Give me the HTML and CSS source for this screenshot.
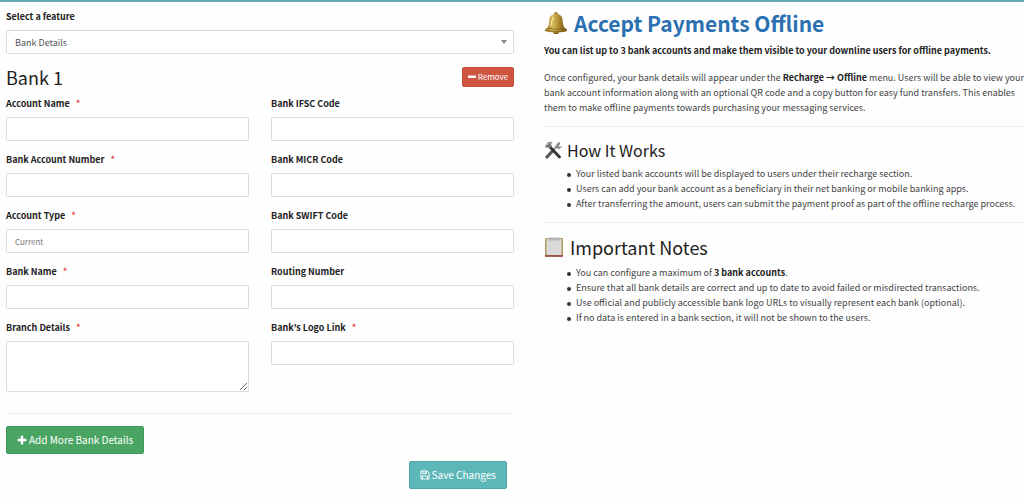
FILE: index.html
```
<!DOCTYPE html>
<html lang="en">
  <head>
    <meta charset="UTF-8" />
    <meta name="viewport" content="width=device-width, initial-scale=1.0" />
    <title>Bank Details</title>
    <link rel="stylesheet" href="styles.css">
  </head>
  <body>
    <main class="page">
      <form class="settings">
        <label class="label" for="feature">Select a feature</label>
        <div class="select">
          <select class="control" id="feature">
            <option>Bank Details</option>
          </select>
        </div>

        <div class="bank-header">
          <h2 class="bank-title">Bank 1</h2>
          <button class="btn btn--danger" type="button">
            <svg class="icon icon--small" viewBox="0 0 16 16" aria-hidden="true"><rect x="0" y="5" width="16" height="5" rx="1" /></svg>
            Remove
          </button>
        </div>

        <div class="fields">
          <div class="field">
            <label class="label" for="account-name">Account Name <span class="required">*</span></label>
            <input class="control" id="account-name" type="text" />
          </div>
          <div class="field">
            <label class="label" for="ifsc">Bank IFSC Code</label>
            <input class="control" id="ifsc" type="text" />
          </div>
          <div class="field">
            <label class="label" for="account-number">Bank Account Number <span class="required">*</span></label>
            <input class="control" id="account-number" type="text" />
          </div>
          <div class="field">
            <label class="label" for="micr">Bank MICR Code</label>
            <input class="control" id="micr" type="text" />
          </div>
          <div class="field">
            <label class="label" for="account-type">Account Type <span class="required">*</span></label>
            <select class="control control--type" id="account-type">
              <option>Current</option>
            </select>
          </div>
          <div class="field">
            <label class="label" for="swift">Bank SWIFT Code</label>
            <input class="control" id="swift" type="text" />
          </div>
          <div class="field">
            <label class="label" for="bank-name">Bank Name <span class="required">*</span></label>
            <input class="control" id="bank-name" type="text" />
          </div>
          <div class="field">
            <label class="label" for="routing">Routing Number</label>
            <input class="control" id="routing" type="text" />
          </div>
          <div class="field">
            <label class="label" for="branch">Branch Details <span class="required">*</span></label>
            <textarea class="control control--area" id="branch"></textarea>
          </div>
          <div class="field">
            <label class="label" for="logo">Bank's Logo Link <span class="required">*</span></label>
            <input class="control" id="logo" type="text" />
          </div>
        </div>

        <hr class="divider divider--form" />

        <button class="btn btn--success" type="button">
          <svg class="icon" viewBox="0 0 16 16" aria-hidden="true"><path d="M6 1h4v5h5v4h-5v5H6v-5H1V6h5z" /></svg>
          Add More Bank Details
        </button>
        <div class="actions">
          <button class="btn btn--primary" type="submit">
            <svg class="icon icon--line" viewBox="0 0 16 16" aria-hidden="true">
              <path d="M1.5 1.5h10l3 3v10h-13z" />
              <path d="M4.5 1.5v4h6v-4M8.5 2.5v2M4 14.5v-5h8v5" />
            </svg>
            Save Changes
          </button>
        </div>
      </form>

      <section class="help">
        <h1 class="help-title">
          <svg class="help-icon help-icon--bell" viewBox="0 0 24 24" aria-hidden="true">
            <defs>
              <linearGradient id="gold">
                <stop offset="0" stop-color="#9a7420" />
                <stop offset="0.35" stop-color="#d8bc60" />
                <stop offset="0.65" stop-color="#ab852c" />
                <stop offset="1" stop-color="#6b4c0f" />
              </linearGradient>
            </defs>
            <circle cx="12" cy="3" r="2" fill="#a98227" />
            <ellipse cx="12" cy="21" rx="3" ry="2" fill="#70500f" />
            <path d="M12 3C7 3 5.500 6 5.300 10C5 15 4 16.500 1.500 18C.5 19 1 20 2.500 20.500C8 22 16 22 21.500 20.500C23 20 23.500 19 22.500 18C20 16.500 19 15 18.700 10C18.500 6 17 3 12 3z" fill="url(#gold)" />
            <path d="M4 17q8 3 16 0M2 19.500q10 2.500 20 0" fill="none" stroke="#7d5c17" stroke-width=".8" />
            <path d="M9 6q-1.500 4-2 9" fill="none" stroke="#f7e7a0" stroke-width="1.200" />
          </svg>
          Accept Payments Offline
        </h1>
        <p class="lead">You can list up to 3 bank accounts and make them visible to your downline users for offline payments.</p>
        <p class="text">
          Once configured, your bank details will appear under the <strong>Recharge → Offline</strong> menu. Users will be able to view your
          bank account information along with an optional QR code and a copy button for easy fund transfers. This enables
          them to make offline payments towards purchasing your messaging services.
        </p>
        <hr class="divider" />

        <h3 class="help-heading">
          <svg class="help-icon help-icon--tools" viewBox="0 0 18 18" aria-hidden="true">
            <path d="M15.500 2.500L8 10" stroke="#9a9a9a" stroke-width="2" />
            <path d="M9 9.500L3 16" stroke="#555" stroke-width="3.200" stroke-linecap="round" />
            <path d="M12.500 3.500l2-2.500a3.500 3.500 0 0 1 2 1l-2 2 .5 1.500 1.500.3 1-1.300c.5 2-1.500 4-4 3.300L11 6z" fill="#8d8d8d" />
            <path d="M6 6l9.500 10" stroke="#333" stroke-width="2.800" stroke-linecap="round" />
            <path d="M1 5.500L3 3l.5-1.500C5 .5 7 .5 8.500 1.500L6.800 3 8 5.500 5.500 8 4 6 2.500 7z" fill="#777" />
            <path d="M3 4.500l2-2.500 2-.5" fill="none" stroke="#c4c4c4" stroke-width=".8" />
          </svg>
          How It Works
        </h3>
        <ul class="list">
          <li>Your listed bank accounts will be displayed to users under their recharge section.</li>
          <li>Users can add your bank account as a beneficiary in their net banking or mobile banking apps.</li>
          <li>After transferring the amount, users can submit the payment proof as part of the offline recharge process.</li>
        </ul>
        <hr class="divider" />

        <h2 class="help-heading help-heading--large">
          <svg class="help-icon help-icon--clipboard" viewBox="0 0 20 20" aria-hidden="true">
            <rect x="1" y="1" width="18" height="18.500" rx="1" fill="#b39a62" />
            <path d="M1 19h18" stroke="#8c3f35" stroke-width="1.500" />
            <rect x="2.500" y="2" width="15" height="16" fill="#dcdcda" />
            <path d="M4 5h12M4 8h12M4 11h12M4 14h12" stroke="#d2d2d1" stroke-width=".8" />
            <path d="M5 .5h10l1 3H4z" fill="#b5b7b7" />
          </svg>
          Important Notes
        </h2>
        <ul class="list">
          <li>You can configure a maximum of <strong>3 bank accounts</strong>.</li>
          <li>Ensure that all bank details are correct and up to date to avoid failed or misdirected transactions.</li>
          <li>Use official and publicly accessible bank logo URLs to visually represent each bank (optional).</li>
          <li>If no data is entered in a bank section, it will not be shown to the users.</li>
        </ul>
      </section>
    </main>
  </body>
</html>
```

FILE: styles.css
```
* {
  margin: 0;
  padding: 0;
  box-sizing: border-box;
}

body {
  font-family: "Noto Sans CJK SC", "Open Sans", sans-serif;
  font-size: 9px;
  line-height: 15px;
  color: #444;
  background-color: #fefefe;
  border-top: 2px solid #62a9b3;
}

.page {
  display: grid;
  grid-template-columns: 127fr 120fr;
  gap: 30px;
  padding: 7px 0 14px 6px;
}

.label {
  display: block;
  margin-bottom: 6px;
  font-weight: bold;
  color: #222;
}

.required {
  margin-left: 4px;
  color: #e0523f;
}

.control {
  display: block;
  width: 100%;
  height: 24px;
  padding: 0 8px;
  font: inherit;
  color: #555;
  background-color: #fff;
  border: 1px solid #ddd;
  border-radius: 1px;
  appearance: none;
}

.control--type {
  font-size: 8px;
  color: #777;
}

.control--area {
  height: 51px;
  resize: both;
}

.select {
  display: grid;
  align-items: center;
}

.select .control,
.select::after {
  grid-area: 1 / 1;
}

.select::after {
  content: "";
  justify-self: end;
  margin-right: 7px;
  border: 3px solid transparent;
  border-top: 4px solid #888;
  border-bottom: 0;
  pointer-events: none;
}

.bank-header {
  display: flex;
  align-items: center;
  justify-content: space-between;
  margin: 11px 0 7px;
}

.bank-title {
  font-size: 18px;
  line-height: 24px;
  font-weight: normal;
  color: #222;
}

.fields {
  display: grid;
  grid-template-columns: 1fr 1fr;
  gap: 11px 22px;
}

.divider {
  border: 0;
  border-top: 1px solid #eee;
  margin: 11px 0;
}

.divider--form {
  margin: 21px 0 12px;
}

.btn {
  display: inline-flex;
  align-items: center;
  gap: 2px;
  padding: 0 10px;
  font: inherit;
  font-size: 10px;
  line-height: 26px;
  color: #fff;
  border: 1px solid;
  border-radius: 2px;
  cursor: pointer;
}

.btn--danger {
  padding: 0 5px;
  font-size: 8px;
  line-height: 18px;
  background-color: #cd5542;
  border-color: #c44c39;
}

.btn--success {
  background-color: #4aa563;
  border-color: #429859;
}

.btn--primary {
  background-color: #5db7b8;
  border-color: #52a5a7;
}

.icon {
  width: 10px;
  height: 10px;
  fill: currentColor;
}

.icon--small {
  width: 8px;
  height: 8px;
}

.icon--line {
  fill: none;
  stroke: currentColor;
  stroke-width: 1.5;
}

.actions {
  display: flex;
  justify-content: flex-end;
  padding: 7px 7px 0 0;
}

.help-title {
  display: flex;
  align-items: center;
  gap: 6px;
  margin-bottom: 6px;
  font-size: 21px;
  line-height: 28px;
  color: #2b70b0;
}

.help-icon--bell {
  width: 24px;
  height: 24px;
}

.help-icon--tools {
  width: 18px;
  height: 18px;
}

.help-icon--clipboard {
  width: 20px;
  height: 20px;
}

.lead {
  margin-bottom: 12px;
  font-weight: bold;
  color: #222;
}

strong {
  color: #222;
}

.help-heading {
  display: flex;
  align-items: center;
  gap: 5px;
  margin-bottom: 4px;
  font-size: 16px;
  line-height: 24px;
  font-weight: normal;
  color: #222;
}

.help-heading--large {
  gap: 6px;
  margin-bottom: 5px;
  font-size: 18px;
  line-height: 26px;
}

.list {
  padding-left: 23px;
  list-style: none;
}

.list li::before {
  content: "";
  display: inline-block;
  width: 4px;
  height: 4px;
  margin-right: 5px;
  border-radius: 50%;
  background-color: #333;
  vertical-align: middle;
}
```
